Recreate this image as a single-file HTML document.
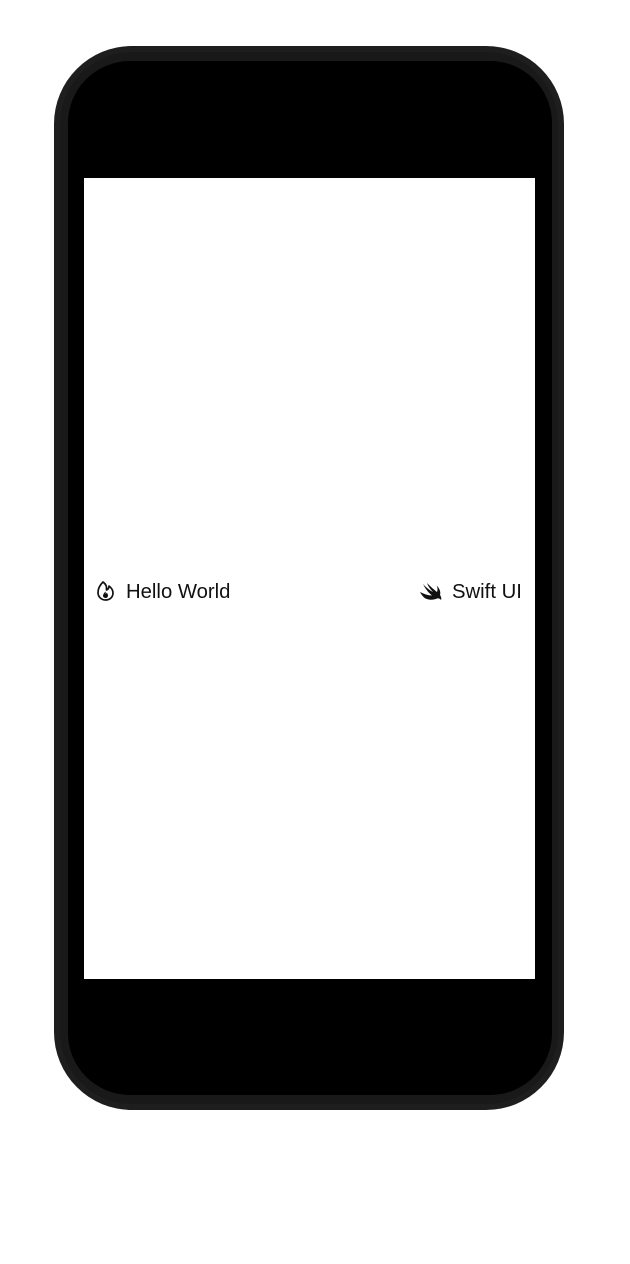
<!DOCTYPE html>
<html><head><style>
html,body{margin:0;padding:0;background:#fff;width:630px;height:1264px;overflow:hidden;}
.outer{position:absolute;left:54px;top:46px;width:510px;height:1064px;background:#1e1e1e;border-radius:78px;}
.mid{position:absolute;left:60px;top:52px;width:498px;height:1052px;background:#191919;border-radius:72px;}
.inner{position:absolute;left:68px;top:61px;width:484px;height:1034px;background:#000;border-radius:62px;}
.screen{position:absolute;left:84px;top:178px;width:451px;height:801px;background:#fff;}
.t{position:absolute;font-family:"Liberation Sans",sans-serif;font-size:20.3px;color:#111;top:580px;line-height:24px;}
</style></head><body>
<div class="outer"></div><div class="mid"></div><div class="inner"></div>
<div class="screen"></div>
<svg style="position:absolute;left:96px;top:580px" width="20" height="22" viewBox="0 0 20 22">
<path d="M7 2 C4 5 2 8 2 12.5 C2 17 5.5 20 9.5 20 C14 20 17 17 17 13 C17 9.5 15 7.5 13 6 C13 8 12 9.5 10.5 10 C11 6.5 10 4 7 2 Z" fill="none" stroke="#111" stroke-width="1.7" stroke-linejoin="round"/>
<path d="M9.5 11.5 C8 13 7 14.5 7 15.8 C7 17.2 8.2 18 9.5 18 C11 18 12 17 12 15.5 C12 14 11 13 10.5 12.5 C10.5 13.5 10 14 9.7 14 C9.8 13 9.8 12.2 9.5 11.5Z" fill="#111"/>
</svg>
<div class="t" style="left:126px">Hello World</div>
<svg style="position:absolute;left:419px;top:581px" width="24" height="22" viewBox="0 0 24 22">
<path d="M1 11 C5 13 9 14.5 13 14.5 C9 11.5 6 7 4 3 C7 6.5 11 9.5 14 11 C11 8 9 5 8 2 C12 6 16 9.5 18 11 C19 8.5 18.5 6 17.5 4.5 C20.5 7 22 11 21 14 C22.5 16 22.5 18 22 19 C21 17.5 19.5 17 18 17.5 C14 19.5 8 19 5 16.5 C3.5 15 2 13 1 11Z" fill="#111"/>
</svg>
<div class="t" style="left:452px">Swift UI</div>
</body></html>
